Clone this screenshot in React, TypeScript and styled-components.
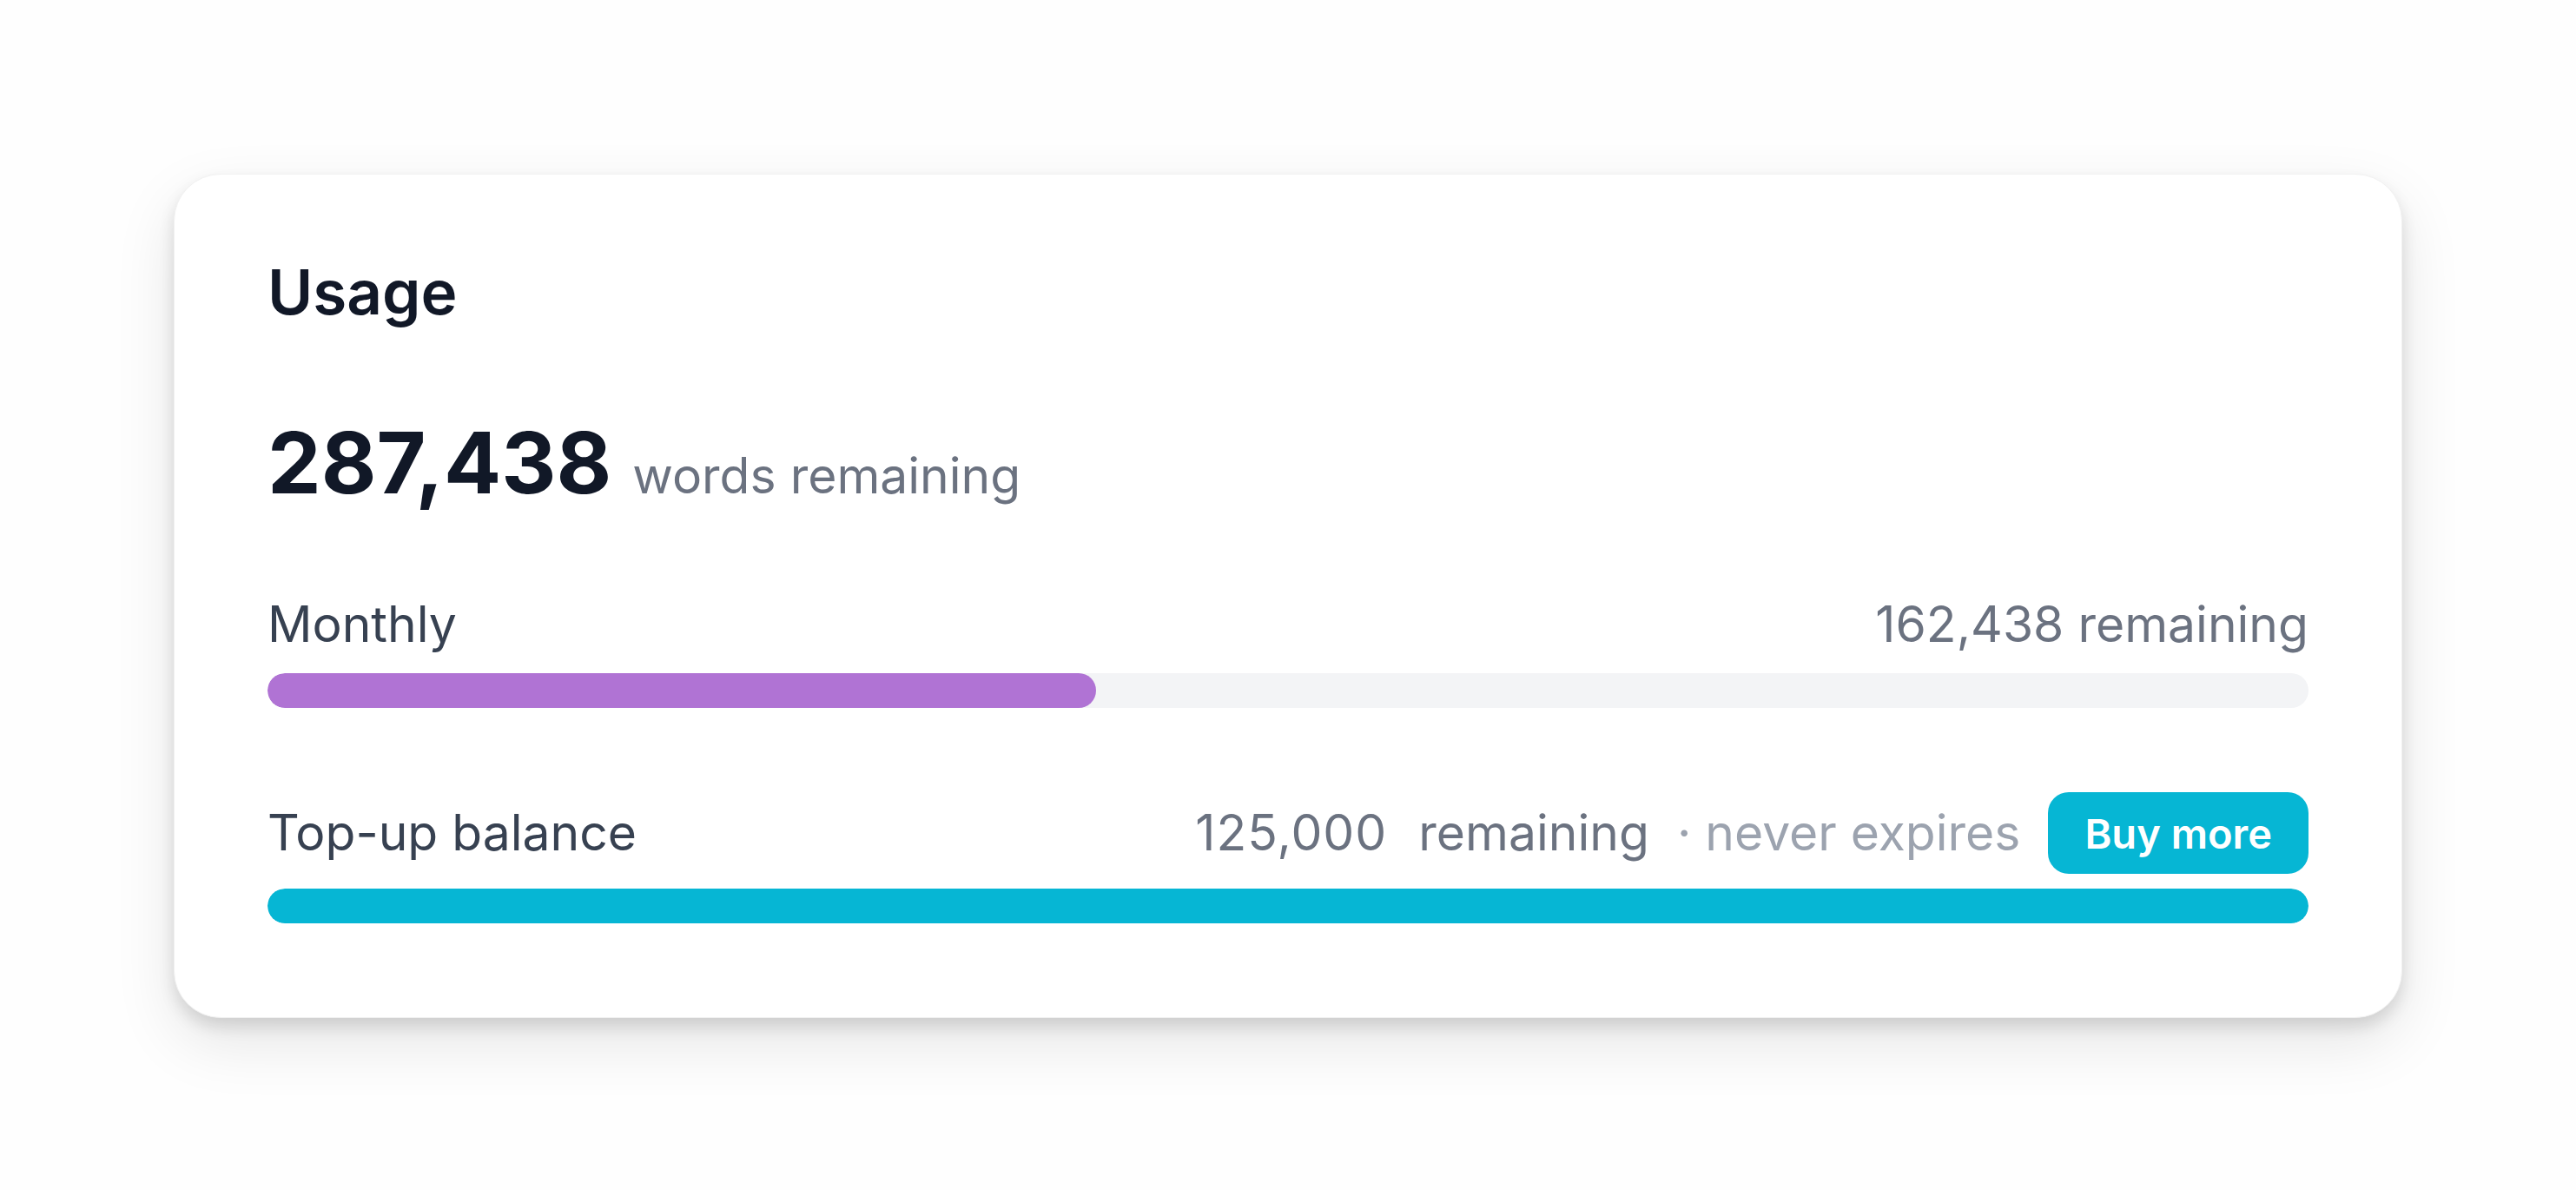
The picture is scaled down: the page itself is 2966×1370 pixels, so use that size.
import React from 'react';
import styled, { createGlobalStyle } from 'styled-components';

const GlobalStyle = createGlobalStyle`
  html, body {
    margin: 0;
    padding: 0;
    background: #fefefe;
    font-family: Inter, "Noto Sans", "Liberation Sans", sans-serif;
  }
`;

const MONTHLY_LIMIT = 400000;

const Page = styled.div`
  box-sizing: border-box;
  width: 100vw;
  min-height: 100vh;
  padding: 200px;
`;

const Card = styled.section`
  box-sizing: border-box;
  background: #ffffff;
  border-radius: 54px;
  border: 1px solid #f1f1f1;
  padding: 93px 107px 108px;
  box-shadow: 0 10px 18px rgba(0, 0, 0, 0.12), 0 28px 70px rgba(0, 0, 0, 0.1);
`;

const Title = styled.h2`
  margin: 0;
  font-size: 71px;
  line-height: 84px;
  font-weight: 600;
  color: #111827;
`;

const Total = styled.div`
  margin-top: 97px;
  line-height: 116px;
  white-space: nowrap;
`;

const Big = styled.span`
  font-size: 98px;
  font-weight: 700;
  color: #111827;
`;

const Unit = styled.span`
  margin-left: 24px;
  font-size: 57px;
  font-weight: 400;
  color: #6b7280;
`;

const Meter = styled.div<{ $top: number }>`
  margin-top: ${(p) => p.$top}px;
  display: flex;
  flex-direction: column;
`;

const Head = styled.div<{ $gap: number }>`
  display: flex;
  align-items: center;
  justify-content: space-between;
  margin-bottom: ${(p) => p.$gap}px;
  line-height: 68px;
  font-size: 57px;
`;

const Label = styled.span`
  color: #374151;
  font-weight: 400;
`;

const Info = styled.div`
  display: flex;
  align-items: center;
  gap: 32px;
  white-space: nowrap;
`;

const Note = styled.span<{ $muted?: boolean }>`
  color: ${(p) => (p.$muted ? '#9ca3af' : '#6b7280')};
`;

const Amount = styled(Note)`
  letter-spacing: 1px;
  margin-right: 4px;
`;

const BuyButton = styled.button`
  height: 94px;
  padding: 0 42px;
  border: none;
  border-radius: 24px;
  background: #06b6d4;
  color: #ffffff;
  font-family: inherit;
  font-size: 47px;
  font-weight: 600;
  cursor: pointer;
`;

const Track = styled.div`
  height: 40px;
  border-radius: 20px;
  background: #f3f4f6;
  overflow: hidden;
`;

const Fill = styled.div<{ $color: string }>`
  height: 100%;
  border-radius: 20px;
  background: ${(p) => p.$color};
`;

export default function App() {
  const monthly = 162438;
  const topUp = 125000;
  const total = monthly + topUp;
  const fmt = (n: number) => n.toLocaleString('en-US');

  return (
    <>
      <GlobalStyle />
      <Page>
        <Card>
          <Title>Usage</Title>
          <Total>
            <Big>{fmt(total)}</Big>
            <Unit>words remaining</Unit>
          </Total>

          <Meter $top={65}>
            <Head $gap={22}>
              <Label>Monthly</Label>
              <Note>{fmt(monthly)} remaining</Note>
            </Head>
            <Track>
              <Fill $color="#b073d4" style={{ width: `${(monthly / MONTHLY_LIMIT) * 100}%` }} />
            </Track>
          </Meter>

          <Meter $top={97}>
            <Head $gap={17}>
              <Label>Top-up balance</Label>
              <Info>
                <Amount>{fmt(topUp)}</Amount>
                <Note>remaining</Note>
                <Note $muted>· never expires</Note>
                <BuyButton>Buy more</BuyButton>
              </Info>
            </Head>
            <Track>
              <Fill $color="#06b6d4" style={{ width: '100%' }} />
            </Track>
          </Meter>
        </Card>
      </Page>
    </>
  );
}
